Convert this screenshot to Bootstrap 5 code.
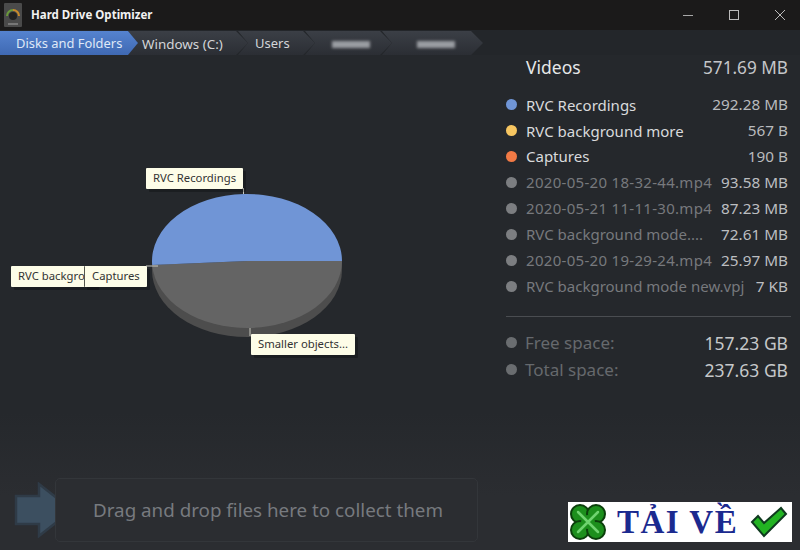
<!DOCTYPE html>
<html lang="en">
<head>
  <meta charset="UTF-8" />
  <meta name="viewport" content="width=device-width, initial-scale=1" />
  <title>Hard Drive Optimizer</title>
  <link href="https://cdn.jsdelivr.net/npm/bootstrap@5.3.0/dist/css/bootstrap.min.css" rel="stylesheet" />
  <style>
    html, body { height: 100%; }
    body { width: 800px; height: 550px; overflow: hidden; background: linear-gradient(#25282c 75%, #2b2d31 90%); font-family: "Noto Sans", "Open Sans", sans-serif; color: #d4d6d8; position: relative; }
    .title-bar { height: 30px; background: #1b1a1a; color: #f2f2f2; font-size: 11.5px; font-weight: 700; }
    .app-logo { width: 18px; height: 24px; margin-left: 4px; margin-right: 9px; }
    .win-btns { margin-right: -3px; }
    .win-btn { width: 46px; height: 30px; }
    .crumbs { height: 25px; padding-top: 1px; background: #23262a; }
    .crumb { height: 24px; padding-top: 2px; font-size: 13px; color: #d3d5d8; background: linear-gradient(#3b3f46, #2b2e34); clip-path: polygon(0 0, calc(100% - 12px) 0, 100% 50%, calc(100% - 12px) 100%, 0 100%, 10px 50%); margin-right: -10px; }
    .crumb-first { width: 138px; padding-left: 16px; font-size: 12.9px; background: linear-gradient(#5583cf, #3f69b3); color: #dfe8f7; clip-path: polygon(0 0, calc(100% - 10px) 0, 100% 50%, calc(100% - 10px) 100%, 0 100%); position: relative; z-index: 2; }
    .crumb-c { width: 120px; padding-left: 14px; font-size: 13.4px; }
    .crumb-u { width: 77px; padding-left: 17px; }
    .crumb-x { width: 87px; padding-left: 27px; }
    .crumb-y { width: 101px; padding-left: 35px; }
    .blurred { width: 38px; height: 7px; background: #9a9da2; filter: blur(1.5px); }
    .left-pane { width: 490px; }
    .chart-area { height: 423px; }
    .pie { left: 0; top: 0; }
    .pie-label { position: absolute; height: 21px; background: #fdfde8; color: #333; font-size: 11.3px; line-height: 20px; padding: 0 7px; box-shadow: 3px 3px 0 rgba(0, 0, 0, .25); white-space: nowrap; overflow: hidden; border-radius: 1px; }
    .label-front { border-left: 1px solid #55564c; }
    .drop-row { padding-left: 13px; }
    .drop-box { width: 423px; height: 64px; margin-left: -20px; border: 1px solid #33363a; border-radius: 5px; background: #2b2d31; padding-left: 37px; color: #777a7f; font-size: 18.8px; }
    .right-pane { width: 310px; padding: 0 12px 0 16px; }
    .sum-head { height: 25px; padding-left: 20px; font-size: 17.5px; color: #e6e7e8; }
    .sum-head .num { color: #c4c6c9; font-size: 17.2px; }
    .sum-list { margin-top: 12px; }
    .sum-row { height: 25.9px; font-size: 15px; color: #d9dadc; }
    .sum-row .num { color: #b9bbbe; font-size: 15.3px; }
    .sum-row.dim { color: #77797d; }
    .sum-row.dim .num { color: #bcbec1; }
    .dated { letter-spacing: .3px; }
    .dot { width: 11px; height: 11px; border-radius: 50%; margin-right: 9px; flex: none; background: #7c7e81; }
    .sep { height: 1px; background: #4a4d51; margin: 17px -3px 12px 0; }
    .free-row { height: 27px; font-size: 17px; color: #66696d; }
    .free-row .num { color: #c6c8ca; font-size: 17.5px; }
    .free-row .dot { background: #6a6d70; margin-right: 8px; }
    .get-it { position: absolute; left: 568px; top: 502px; width: 224px; height: 40px; background: #fff; }
    .get-it-text { font-family: "Liberation Serif", serif; font-weight: 700; font-size: 33px; color: #1b2a8f; letter-spacing: 1.5px; line-height: 40px; margin-left: 9px; }
  </style>
</head>
<body>
  <header class="title-bar d-flex align-items-center">
    <svg class="app-logo" viewBox="0 0 18 24">
      <rect width="18" height="24" rx="1" fill="#4a4a4a"/>
      <path d="M3 13a6 6 0 0 1 6-6" fill="none" stroke="#6a9a3a" stroke-width="2"/>
      <path d="M9 7a6 6 0 0 1 6 6" fill="none" stroke="#c98a2a" stroke-width="2"/>
      <circle cx="9" cy="13" r="4" fill="#222"/>
      <rect x="4" y="20" width="10" height="2" fill="#777"/>
    </svg>
    <span>Hard Drive Optimizer</span>
    <div class="win-btns ms-auto d-flex">
      <div class="win-btn d-flex align-items-center justify-content-center"><svg width="12" height="12"><path d="M1 6.500h10" stroke="#a8a8a8"/></svg></div>
      <div class="win-btn d-flex align-items-center justify-content-center"><svg width="12" height="12"><rect x="1.500" y="1.500" width="9" height="9" fill="none" stroke="#bbb"/></svg></div>
      <div class="win-btn d-flex align-items-center justify-content-center"><svg width="12" height="12"><path d="M1 1l10 10M11 1L1 11" stroke="#bbb"/></svg></div>
    </div>
  </header>

  <nav class="crumbs d-flex">
    <div class="crumb crumb-first d-flex align-items-center">Disks and Folders</div>
    <div class="crumb crumb-c d-flex align-items-center">Windows (C:)</div>
    <div class="crumb crumb-u d-flex align-items-center">Users</div>
    <div class="crumb crumb-x d-flex align-items-center"><div class="blurred"></div></div>
    <div class="crumb crumb-y d-flex align-items-center"><div class="blurred"></div></div>
  </nav>

  <main class="d-flex">
    <section class="left-pane d-flex flex-column">
      <div class="chart-area position-relative">
        <svg class="pie position-absolute" width="490" height="423" viewBox="0 55 490 423">
          <path d="M342 261V270A95 67 0 0 1 152 270V265Z" fill="#4d4d4d"/>
          <path d="M342 261A95 67 0 0 1 152.170 265L247 261Z" fill="#646464"/>
          <path d="M342 261A95 67 0 1 0 152.170 265L247 261Z" fill="#7095d6"/>
          <path d="M243.500 188V194M146 266H158M250 328V336" stroke="#c9c9c0" stroke-width="1"/>
        </svg>
        <div class="pie-label" style="left:146px;top:113px">RVC Recordings</div>
        <div class="pie-label" style="left:11px;top:211px;width:85px">RVC background more</div>
        <div class="pie-label label-front" style="left:84px;top:211px">Captures</div>
        <div class="pie-label" style="left:251px;top:279px">Smaller objects...</div>
      </div>
      <div class="drop-row d-flex align-items-center">
        <svg width="62" height="56" viewBox="0 0 62 56">
          <path d="M3 14H26V2L59 28L26 54V42H3Z" fill="#3c4f60" stroke="#2f3b47" stroke-width="2.500"/>
        </svg>
        <div class="drop-box d-flex align-items-center">Drag and drop files here to collect them</div>
      </div>
    </section>

    <aside class="right-pane">
      <div class="sum-head d-flex justify-content-between align-items-center"><span>Videos</span><span class="num">571.69 MB</span></div>
      <div class="sum-list">
        <div class="sum-row d-flex align-items-center"><span class="dot" style="background:#7095d6"></span><span>RVC Recordings</span><span class="num ms-auto">292.28 MB</span></div>
        <div class="sum-row d-flex align-items-center"><span class="dot" style="background:#f7c661"></span><span>RVC background more</span><span class="num ms-auto">567 B</span></div>
        <div class="sum-row d-flex align-items-center"><span class="dot" style="background:#f27a45"></span><span>Captures</span><span class="num ms-auto">190 B</span></div>
        <div class="sum-row dim d-flex align-items-center"><span class="dot"></span><span class="dated">2020-05-20 18-32-44.mp4</span><span class="num ms-auto">93.58 MB</span></div>
        <div class="sum-row dim d-flex align-items-center"><span class="dot"></span><span class="dated">2020-05-21 11-11-30.mp4</span><span class="num ms-auto">87.23 MB</span></div>
        <div class="sum-row dim d-flex align-items-center"><span class="dot"></span><span>RVC background mode....</span><span class="num ms-auto">72.61 MB</span></div>
        <div class="sum-row dim d-flex align-items-center"><span class="dot"></span><span class="dated">2020-05-20 19-29-24.mp4</span><span class="num ms-auto">25.97 MB</span></div>
        <div class="sum-row dim d-flex align-items-center"><span class="dot"></span><span>RVC background mode new.vpj</span><span class="num ms-auto">7 KB</span></div>
      </div>
      <div class="sep"></div>
      <div class="free-row d-flex align-items-center"><span class="dot"></span><span>Free space:</span><span class="num ms-auto">157.23 GB</span></div>
      <div class="free-row d-flex align-items-center"><span class="dot"></span><span>Total space:</span><span class="num ms-auto">237.63 GB</span></div>
    </aside>
  </main>

  <div class="get-it d-flex align-items-center">
    <svg width="40" height="40" viewBox="0 0 40 40">
      <g fill="#1c8f1c" stroke="#0b3f0b" stroke-width="2">
        <circle cx="12" cy="12" r="9"/><circle cx="28" cy="12" r="9"/><circle cx="12" cy="28" r="9"/><circle cx="28" cy="28" r="9"/>
      </g>
      <circle cx="20" cy="20" r="7" fill="#1c8f1c"/>
      <path d="M10 10L30 30M30 10L10 30" stroke="#6fd36f" stroke-width="2.500" stroke-linecap="round"/>
    </svg>
    <span class="get-it-text">TẢI VỀ</span>
    <svg class="ms-auto me-1" width="38" height="32" viewBox="0 0 38 32">
      <path d="M2 16L8 10L14 17L31 2L36 8L14 30Z" fill="#22b322" stroke="#0f3a1f" stroke-width="2"/>
    </svg>
  </div>
</body>
</html>
